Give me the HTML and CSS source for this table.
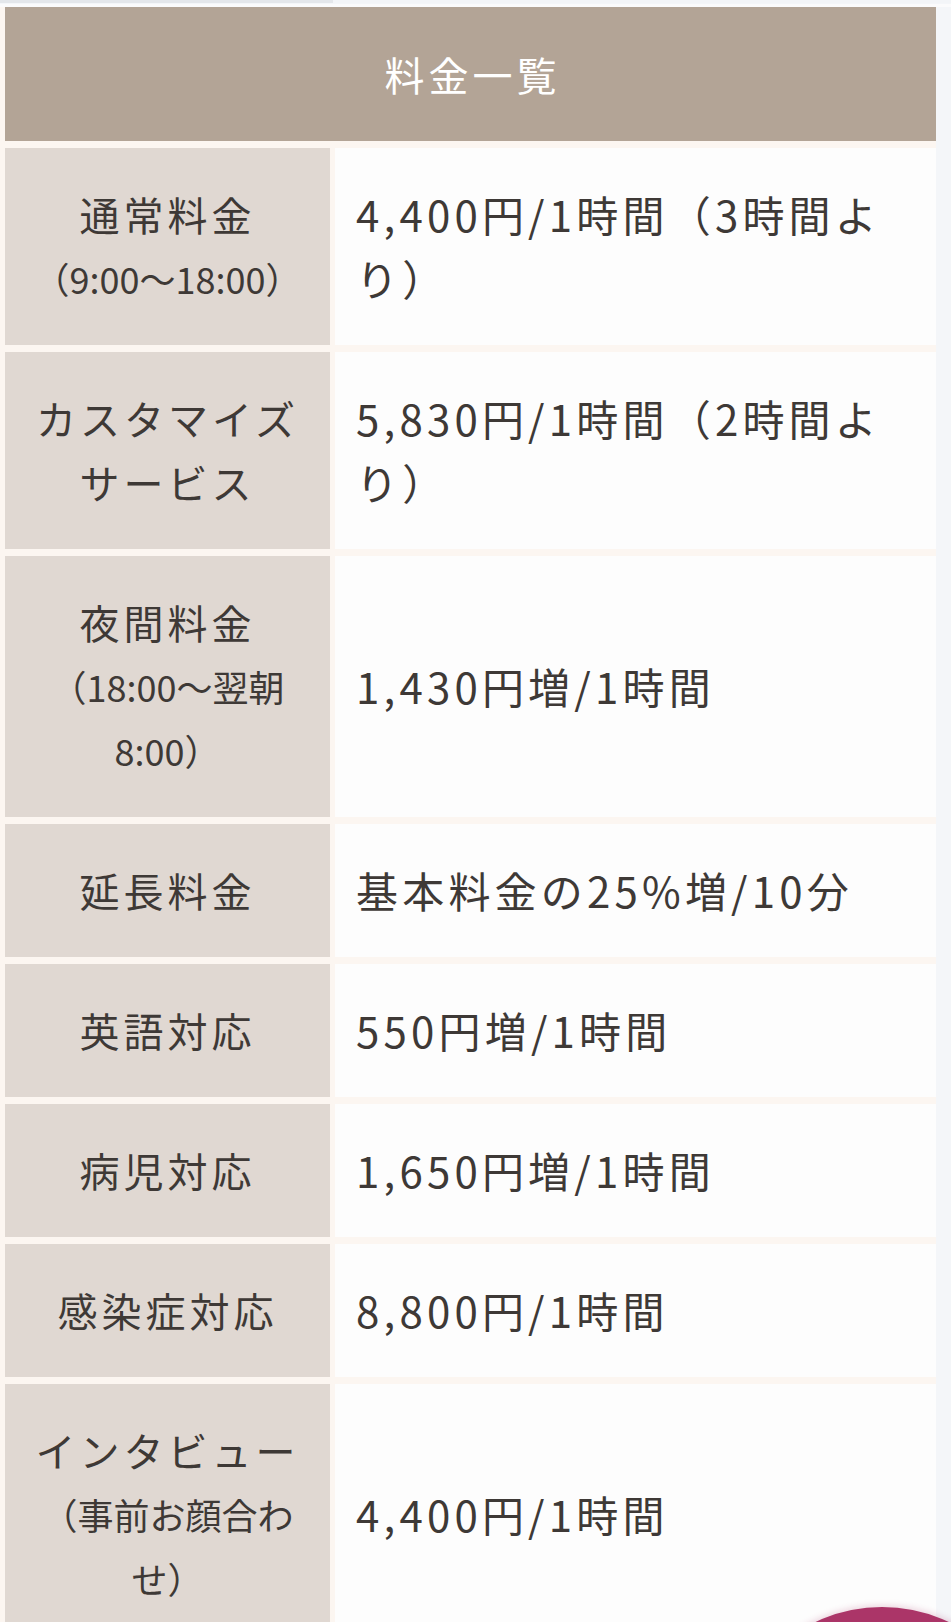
FILE: index.html
```html
<!DOCTYPE html>
<html lang="ja">
<head>
<meta charset="utf-8">
<title>料金一覧</title>
<link rel="stylesheet" href="styles.css">
</head>
<body>
<div class="prev-strip"><div class="prev-cell"></div></div>
<div class="price-table">
  <div class="head">料金一覧</div>

  <div class="label"><span class="main">通常料金</span><span class="sub">（9:00〜18:00）</span></div>
  <div class="value">4,400円/1時間（3時間より）</div>

  <div class="label"><span class="main">カスタマイズサービス</span></div>
  <div class="value">5,830円/1時間（2時間より）</div>

  <div class="label"><span class="main">夜間料金</span><span class="sub">（18:00〜翌朝8:00）</span></div>
  <div class="value">1,430円増/1時間</div>

  <div class="label"><span class="main">延長料金</span></div>
  <div class="value">基本料金の25%増/10分</div>

  <div class="label"><span class="main">英語対応</span></div>
  <div class="value">550円増/1時間</div>

  <div class="label"><span class="main">病児対応</span></div>
  <div class="value">1,650円増/1時間</div>

  <div class="label"><span class="main">感染症対応</span></div>
  <div class="value">8,800円/1時間</div>

  <div class="label"><span class="main">インタビュー</span><span class="sub">（事前お顔合わせ）</span></div>
  <div class="value">4,400円/1時間</div>
</div>
<div class="fab"></div>
</body>
</html>
```
FILE: styles.css
```css
html, body {
  margin: 0;
  padding: 0;
  overflow: hidden;
}
body {
  position: relative;
  background: #f4f6f9;
  font-family: "Noto Sans CJK JP", "Noto Sans", sans-serif;
  color: #3e3936;
}
.prev-strip {
  height: 3px;
  background: #f3f5f8;
  display: flex;
  margin-bottom: 4px;
  box-shadow: 0 4px 0 #fbfbfc;
}
.prev-cell {
  width: 333px;
  background: #e4e7eb;
}
.price-table {
  width: 936px;
  box-sizing: border-box;
  padding-left: 5px;
  display: grid;
  grid-template-columns: 325px 1fr;
  gap: 7px 5px;
  background: #fcf6f1;
}
.head {
  grid-column: 1 / -1;
  background: #b3a496;
  color: #ffffff;
  text-align: center;
  font-size: 40px;
  line-height: 64px;
  letter-spacing: 0.1em;
  padding: 35px 0 35px 4px;
}
.label {
  background: #e0d8d2;
  text-align: center;
  font-size: 40px;
  line-height: 64px;
  letter-spacing: 0.1em;
  padding: 34px 20px 35px;
}
.label .main {
  display: block;
}
.label .sub {
  display: block;
  font-size: 36px;
  letter-spacing: 0;
}
.value {
  background: #fdfdfd;
  font-size: 42px;
  line-height: 64px;
  letter-spacing: 0.1em;
  padding: 34px 20px 35px 21px;
  display: flex;
  align-items: center;
}
.fab {
  position: absolute;
  left: 725px;
  top: 1607px;
  width: 314px;
  height: 314px;
  border-radius: 50%;
  background: #ab3568;
  box-shadow: 0 -2px 6px rgba(171, 53, 104, 0.2);
}
```
